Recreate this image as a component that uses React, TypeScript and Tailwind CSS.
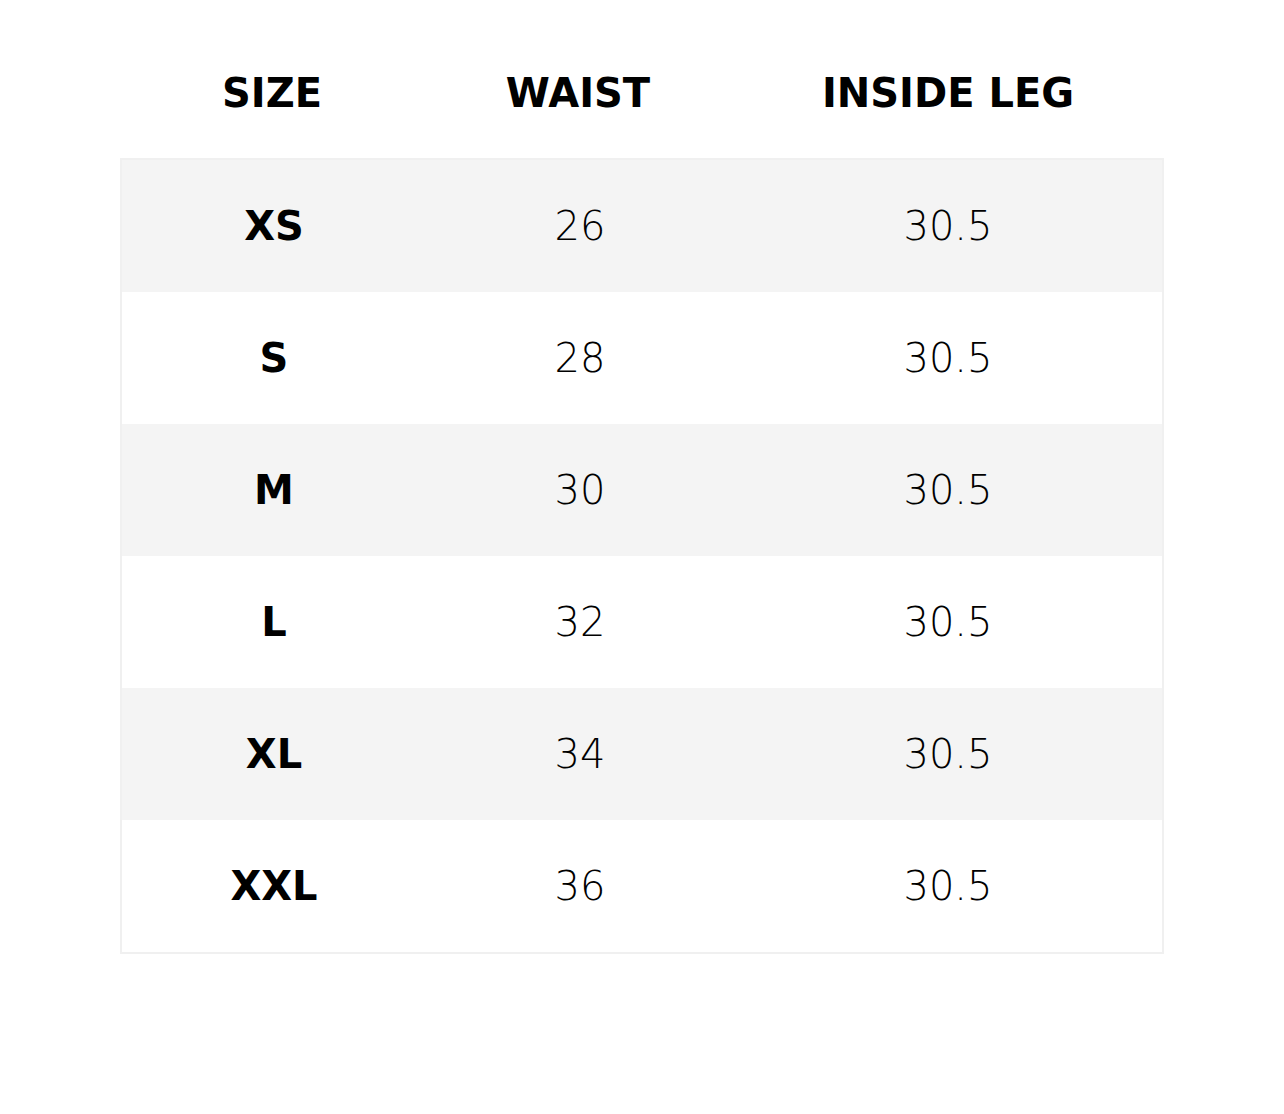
import React from 'react';

const rows = [
  { size: 'XS', waist: '26', leg: '30.5' },
  { size: 'S', waist: '28', leg: '30.5' },
  { size: 'M', waist: '30', leg: '30.5' },
  { size: 'L', waist: '32', leg: '30.5' },
  { size: 'XL', waist: '34', leg: '30.5' },
  { size: 'XXL', waist: '36', leg: '30.5' },
];

const cols = 'grid grid-cols-[304px_308px_1fr]';

export default function App() {
  return (
    <div className="min-h-screen bg-white pt-[28px] font-['DejaVu_Sans',sans-serif] text-black">
      <div className="mx-[120px] w-[1044px]">
        {/* Header */}
        <div className={`${cols} h-[130px] items-center text-center text-[40px] font-bold`}>
          <div>SIZE</div>
          <div>WAIST</div>
          <div>INSIDE LEG</div>
        </div>

        {/* Body */}
        <div className="border-2 border-[#f0f0f0]">
          {rows.map((row, i) => (
            <div
              key={row.size}
              className={`${cols} h-[132px] items-center text-center text-[40px] ${
                i % 2 === 0 ? 'bg-[#f4f4f4]' : 'bg-white'
              }`}
            >
              <div className="font-bold">{row.size}</div>
              <div className="font-extralight">{row.waist}</div>
              <div className="font-extralight">{row.leg}</div>
            </div>
          ))}
        </div>
      </div>
    </div>
  );
}
